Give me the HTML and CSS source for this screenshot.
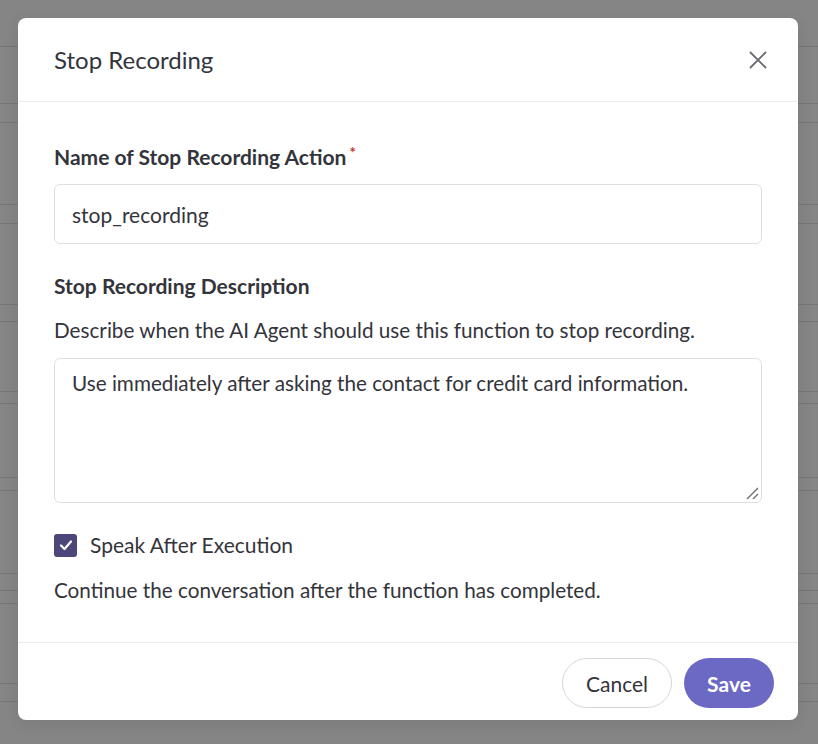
FILE: index.html
```html
<!DOCTYPE html>
<html>
<head>
<meta charset="utf-8">
<link rel="stylesheet" href="styles.css">
</head>
<body>
<div class="backdrop">
  <div class="rows">
    <div class="row" style="top:46px"></div>
    <div class="row" style="top:103px"></div>
    <div class="row" style="top:122px"></div>
    <div class="row" style="top:204px"></div>
    <div class="row" style="top:223px"></div>
    <div class="row" style="top:304px"></div>
    <div class="row" style="top:321px"></div>
    <div class="row" style="top:391px"></div>
    <div class="row" style="top:403px"></div>
    <div class="row" style="top:477px"></div>
    <div class="row" style="top:490px"></div>
    <div class="row" style="top:573px"></div>
    <div class="row" style="top:590px"></div>
    <div class="row" style="top:603px"></div>
    <div class="row" style="top:683px"></div>
    <div class="row" style="top:701px"></div>
  </div>
  <div class="modal">
    <div class="modal-header">
      <h2 class="modal-title">Stop Recording</h2>
      <button class="close-btn" aria-label="Close">
        <svg width="18" height="18" viewBox="0 0 18 18"><path d="M1.5 1.5 L16.5 16.5 M16.5 1.5 L1.5 16.5" stroke="#6b6b74" stroke-width="1.8" stroke-linecap="round"/></svg>
      </button>
    </div>
    <div class="modal-body">
      <label class="field-label">Name of Stop Recording Action<span class="req">*</span></label>
      <div class="input">stop_recording</div>
      <label class="field-label second">Stop Recording Description</label>
      <p class="help">Describe when the AI Agent should use this function to stop recording.</p>
      <div class="textarea">Use immediately after asking the contact for credit card information.
        <svg class="grip" width="14" height="14" viewBox="0 0 14 14"><path d="M2 13 L13 2 M8 13 L13 8" stroke="#6e6e6e" stroke-width="1.4"/></svg>
      </div>
      <div class="check-row">
        <span class="checkbox">
          <svg width="14" height="12" viewBox="0 0 14 12"><path d="M2 6.5 L5.5 10 L12 2.5" fill="none" stroke="#fff" stroke-width="2.2" stroke-linecap="round" stroke-linejoin="round"/></svg>
        </span>
        <span class="check-label">Speak After Execution</span>
      </div>
      <p class="help second-help">Continue the conversation after the function has completed.</p>
    </div>
    <div class="modal-footer">
      <button class="btn btn-cancel">Cancel</button>
      <button class="btn btn-save">Save</button>
    </div>
  </div>
</div>
</body>
</html>
```
FILE: styles.css
```css
* { box-sizing: border-box; }
html, body { margin: 0; padding: 0; }
body {
  width: 818px;
  height: 744px;
  overflow: hidden;
  font-family: Lato, "Open Sans", sans-serif;
  color: #34343c;
}
.backdrop {
  position: relative;
  width: 818px;
  height: 744px;
  background: #858585;
  padding: 18px 20px 24px 18px;
}
.rows { position: absolute; inset: 0; }
.row {
  position: absolute;
  left: 0;
  right: 0;
  height: 1px;
  background: #767676;
}
.modal {
  position: relative;
  width: 780px;
  height: 702px;
  background: #fff;
  border-radius: 8px;
  display: flex;
  flex-direction: column;
  box-shadow: 0 4px 16px rgba(0,0,0,0.08);
}
.modal-header {
  height: 84px;
  border-bottom: 1px solid #ececec;
  display: flex;
  align-items: center;
  justify-content: space-between;
  padding: 0 31px 0 36px;
}
.modal-title {
  margin: 0;
  font-size: 24px;
  font-weight: 400;
  color: #34343c;
  line-height: 28px;
}
.close-btn {
  border: 0;
  background: none;
  padding: 0;
  width: 18px;
  height: 18px;
  display: flex;
}
.modal-body {
  flex: 1;
  padding: 41px 36px 0 36px;
  display: flex;
  flex-direction: column;
}
.field-label {
  display: block;
  font-size: 21px;
  font-weight: 700;
  line-height: 28px;
  color: #34343c;
}
.req {
  color: #c0392b;
  font-size: 15px;
  vertical-align: top;
  position: relative;
  top: -5px;
  margin-left: 3px;
  font-weight: 700;
}
.input {
  margin-top: 13px;
  height: 60px;
  border: 1px solid #dedee2;
  border-radius: 6px;
  padding: 0 17px;
  display: flex;
  align-items: center;
  font-size: 21px;
}
.field-label.second { margin-top: 28px; }
.help {
  margin: 16px 0 0 0;
  font-size: 20.7px;
  line-height: 28px;
}
.textarea {
  position: relative;
  margin-top: 14px;
  height: 145px;
  border: 1px solid #dedee2;
  border-radius: 6px;
  padding: 10px 17px;
  font-size: 20.7px;
  line-height: 28px;
}
.grip {
  position: absolute;
  right: 2px;
  bottom: 2px;
}
.check-row {
  margin-top: 28px;
  display: flex;
  align-items: center;
  height: 28px;
  gap: 13px;
}
.checkbox {
  width: 23px;
  height: 23px;
  border-radius: 3px;
  background: #4b4879;
  display: flex;
  align-items: center;
  justify-content: center;
}
.check-label {
  font-size: 21px;
  line-height: 28px;
}
.second-help { margin-top: 17px; }
.modal-footer {
  height: 78px;
  border-top: 1px solid #ececec;
  display: flex;
  justify-content: flex-end;
  align-items: flex-start;
  padding: 15px 24px 0 0;
  gap: 12px;
}
.btn {
  height: 50px;
  border-radius: 25px;
  font-family: Lato, "Open Sans", sans-serif;
  font-size: 21px;
  padding: 0;
}
.btn-cancel {
  width: 110px;
  background: #fff;
  border: 1px solid #d6d6d8;
  color: #34343c;
}
.btn-save {
  width: 90px;
  background: #6c69c4;
  border: 0;
  color: #fff;
  font-weight: 700;
}
```
